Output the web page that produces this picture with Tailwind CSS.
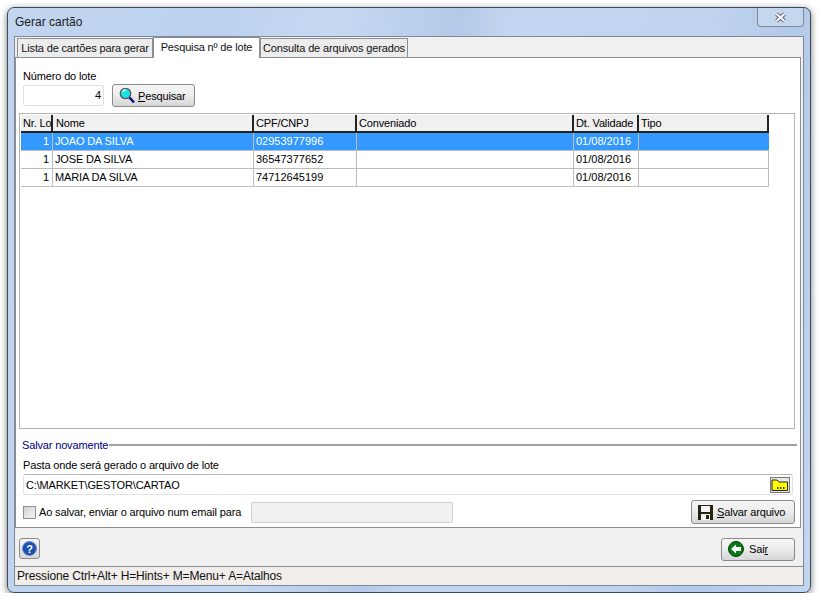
<!DOCTYPE html>
<html lang="en">
<head>
    <meta charset="UTF-8">
    <title>Gerar cartão</title>
    <script src="https://cdn.jsdelivr.net/npm/@tailwindcss/browser@4"></script>
</head>
<body class="bg-white overflow-hidden font-['Liberation_Sans',Arial,sans-serif] text-[11px] leading-[14px] tracking-[-0.15px] text-black">

<div class="ml-[7px] mt-[7px] w-[804px] h-[586px] rounded-[7px] border border-[#3f4a57] bg-[linear-gradient(100deg,#c1d5f0_0%,#bcd1ee_24%,#c6d9f2_36%,#b4cae8_50%,#c3d6f1_56%,#bfd3ef_78%,#b3c9e8_87%,#c2d6f2_100%)] shadow-[0_2px_7px_rgba(0,0,0,0.55)] flex flex-col px-[6px] pb-[6px]">
    <!-- title bar -->
    <div class="h-[28px] shrink-0 flex items-start justify-between">
        <span class="text-[12px] tracking-normal mt-[7px] ml-[1px] text-[#1a1a1a]">Gerar cartão</span>
        <div class="w-[47px] h-[19px] rounded-b-[4px] border border-t-0 border-[#7d8b9c] bg-[#c5d7ef] flex items-center justify-center">
            <svg width="13" height="11" viewBox="0 0 13 11"><path d="M2.5 2 L10.5 9 M10.5 2 L2.5 9" stroke="#5a6470" stroke-width="4"/><path d="M2.5 2 L10.5 9 M10.5 2 L2.5 9" stroke="#f7f7f7" stroke-width="2.2"/></svg>
        </div>
    </div>

    <!-- client area -->
    <div class="flex-1 flex flex-col bg-[#f0f0f0] border border-[#7f8893] min-h-0">
        <!-- tabs -->
        <div class="h-[20px] shrink-0 flex items-end pl-[2px] text-[#111] whitespace-nowrap">
            <div class="h-[19px] w-[136px] bg-[#ececec] border border-b-0 border-[#8a8f96] flex items-center justify-center">Lista de cartões para gerar</div>
            <div class="h-[21px] w-[107px] bg-white border border-b-0 border-[#8a8f96] flex items-center justify-center -mb-[1px] relative pb-[3px]">Pesquisa nº de lote</div>
            <div class="h-[19px] w-[148px] bg-[#ececec] border border-b-0 border-[#8a8f96] flex items-center justify-center">Consulta de arquivos gerados</div>
        </div>

        <!-- page -->
        <div class="h-[471px] shrink-0 bg-white border border-[#8a8f96] mr-[2px] flex flex-col px-[3px]">
            <div class="h-[55px] shrink-0 pl-[4px] pt-[11px]">
                <div>Número do lote</div>
                <div class="flex items-center mt-[1px]">
                    <div class="w-[81px] h-[21px] border border-[#dcdfe3] rounded-[2px] text-right pr-[2px] leading-[19px]">4</div>
                    <button class="ml-[8px] w-[83px] h-[23px] rounded-[3px] border border-[#8b8b8b] bg-[linear-gradient(#f5f5f5_0%,#ededed_45%,#d6d6d6_100%)] flex items-center pl-[6px] gap-[3px]">
                        <svg width="16" height="17" viewBox="0 0 16 17"><circle cx="6.5" cy="6.5" r="5.2" fill="#19e0e6" stroke="#555" stroke-width="1.3"/><path d="M3.5 5 A3.5 3.5 0 0 1 7 3" stroke="#d8ffff" stroke-width="1.3" fill="none"/><path d="M10.5 10.5 L15 15.5" stroke="#10108c" stroke-width="2.6"/></svg>
                        <span><span class="underline">P</span>esquisar</span>
                    </button>
                </div>
            </div>

            <!-- grid -->
            <div class="w-[776px] h-[316px] shrink-0 border border-[#b4b4b4] pl-[1px] pt-[1px]">
                <div class="w-[748px] grid grid-cols-[32px_201px_103px_217px_65px_130px]">
                    <div class="h-[18px] bg-[#f0f0f0] border-r-2 border-b-2 border-[#222] pl-[2px] leading-[16px] overflow-hidden whitespace-nowrap">Nr. Lo</div>
                    <div class="h-[18px] bg-[#f0f0f0] border-r-2 border-b-2 border-[#222] pl-[3px] leading-[16px]">Nome</div>
                    <div class="h-[18px] bg-[#f0f0f0] border-r-2 border-b-2 border-[#222] pl-[2px] leading-[16px]">CPF/CNPJ</div>
                    <div class="h-[18px] bg-[#f0f0f0] border-r-2 border-b-2 border-[#222] pl-[2px] leading-[16px]">Conveniado</div>
                    <div class="h-[18px] bg-[#f0f0f0] border-r-2 border-b-2 border-[#222] pl-[2px] leading-[16px] whitespace-nowrap">Dt. Validade</div>
                    <div class="h-[18px] bg-[#f0f0f0] border-r-2 border-b-2 border-[#222] pl-[2px] leading-[16px]">Tipo</div>

                    <div class="h-[18px] bg-[#3399ff] text-white border-r border-b border-[#bdbdbd] text-right pr-[3px] leading-[17px]">1</div>
                    <div class="h-[18px] bg-[#3399ff] text-white border-r border-b border-[#bdbdbd] pl-[2px] leading-[17px]">JOAO DA SILVA</div>
                    <div class="h-[18px] bg-[#3399ff] text-white border-r border-b border-[#bdbdbd] pl-[2px] leading-[17px] tracking-normal">02953977996</div>
                    <div class="h-[18px] bg-[#3399ff] border-r border-b border-[#bdbdbd]"></div>
                    <div class="h-[18px] bg-[#3399ff] text-white border-r border-b border-[#bdbdbd] pl-[2px] leading-[17px] tracking-normal">01/08/2016</div>
                    <div class="h-[18px] bg-[#3399ff] border-b border-[#bdbdbd]"></div>

                    <div class="h-[18px] border-r border-b border-[#bdbdbd] text-right pr-[3px] leading-[17px]">1</div>
                    <div class="h-[18px] border-r border-b border-[#bdbdbd] pl-[2px] leading-[17px]">JOSE DA SILVA</div>
                    <div class="h-[18px] border-r border-b border-[#bdbdbd] pl-[2px] leading-[17px] tracking-normal">36547377652</div>
                    <div class="h-[18px] border-r border-b border-[#bdbdbd]"></div>
                    <div class="h-[18px] border-r border-b border-[#bdbdbd] pl-[2px] leading-[17px] tracking-normal">01/08/2016</div>
                    <div class="h-[18px] border-r border-b border-[#bdbdbd]"></div>

                    <div class="h-[18px] border-r border-b border-[#bdbdbd] text-right pr-[3px] leading-[17px]">1</div>
                    <div class="h-[18px] border-r border-b border-[#bdbdbd] pl-[2px] leading-[17px]">MARIA DA SILVA</div>
                    <div class="h-[18px] border-r border-b border-[#bdbdbd] pl-[2px] leading-[17px] tracking-normal">74712645199</div>
                    <div class="h-[18px] border-r border-b border-[#bdbdbd]"></div>
                    <div class="h-[18px] border-r border-b border-[#bdbdbd] pl-[2px] leading-[17px] tracking-normal">01/08/2016</div>
                    <div class="h-[18px] border-r border-b border-[#bdbdbd]"></div>
                </div>
            </div>

            <!-- save again -->
            <div class="flex items-center mt-[9px] pl-[3px] h-[14px]">
                <span class="text-[#000080]">Salvar novamente</span>
                <div class="flex-1 h-[2px] bg-[#a0a0a0] ml-[1px]"></div>
            </div>
            <div class="mt-[6px] pl-[4px]">Pasta onde será gerado o arquivo de lote</div>
            <div class="mt-[2px] ml-[4px] mr-[4px] h-[21px] border border-[#dfe3e8] border-t-[#b8b8b8] rounded-[2px] flex items-center justify-between pl-[2px] pr-[2px]">
                <span>C:\MARKET\GESTOR\CARTAO</span>
                <svg width="20" height="16" viewBox="0 0 20 16"><rect x="0.5" y="0.5" width="19" height="15" fill="#e8e8e0" stroke="#777"/><path d="M2 13.5 V3 H7 L9 5 H17.5 V13.5 Z" fill="#ffff00" stroke="#222"/><path d="M10 11 h1.5 M13 11 h1.5 M7 11 h1.5" stroke="#000" stroke-width="1.5"/></svg>
            </div>
            <div class="flex items-center mt-[5px] pl-[4px]">
                <div class="w-[13px] h-[13px] border border-[#8e8e8e] bg-[linear-gradient(135deg,#d4d4d4,#f2f2f2)]"></div>
                <span class="ml-[3px] w-[212px] whitespace-nowrap">Ao salvar, enviar o arquivo num email para</span>
                <div class="w-[202px] h-[21px] border border-[#d0d0d0] rounded-[2px] bg-[#f0f0f0]"></div>
                <button class="ml-[238px] w-[104px] h-[24px] rounded-[3px] border border-[#8b8b8b] bg-[linear-gradient(#f5f5f5_0%,#ededed_45%,#d6d6d6_100%)] flex items-center pl-[6px] gap-[4px] whitespace-nowrap">
                    <svg width="15" height="15" viewBox="0 0 15 15"><rect width="15" height="15" fill="#25250f"/><rect x="3" y="1" width="9" height="6" fill="#f4f4f4"/><rect x="3" y="9" width="9" height="6" fill="#f4f4f4"/><rect x="8" y="10" width="3" height="4" fill="#25250f"/></svg>
                    <span><span class="underline">S</span>alvar arquivo</span>
                </button>
            </div>
        </div>

        <!-- bottom panel -->
        <div class="h-[39px] shrink-0 border-b border-[#8a8f96] flex items-center justify-between pl-[4px] pr-[8px] pt-[2px]">
            <button class="w-[21px] h-[21px] rounded-[3px] border border-[#8b8b8b] bg-[linear-gradient(#f5f5f5,#d6d6d6)] flex items-center justify-center">
                <svg width="15" height="15" viewBox="0 0 15 15"><circle cx="7.5" cy="7.5" r="7" fill="#1c4fb0" stroke="#6f8fc8"/><text x="7.5" y="11.5" text-anchor="middle" font-size="11" font-weight="700" font-family="Liberation Sans" fill="#fff">?</text></svg>
            </button>
            <button class="w-[74px] h-[23px] rounded-[3px] border border-[#8b8b8b] bg-[linear-gradient(#f5f5f5_0%,#ededed_45%,#d6d6d6_100%)] flex items-center pl-[6px] gap-[5px] mt-[2px]">
                <svg width="16" height="16" viewBox="0 0 16 16"><circle cx="8" cy="8" r="7.5" fill="#0a7a14" stroke="#063d0a"/><path d="M3 8 L8 3.5 V6 H13 V10 H8 V12.5 Z" fill="#fff"/></svg>
                <span>Sai<span class="underline">r</span></span>
            </button>
        </div>

        <!-- status bar -->
        <div class="flex-1 bg-[#f0edeb] pl-[2px] flex items-center text-[#111] text-[12px]">Pressione Ctrl+Alt+ H=Hints+ M=Menu+ A=Atalhos</div>
    </div>
</div>

</body>
</html>
